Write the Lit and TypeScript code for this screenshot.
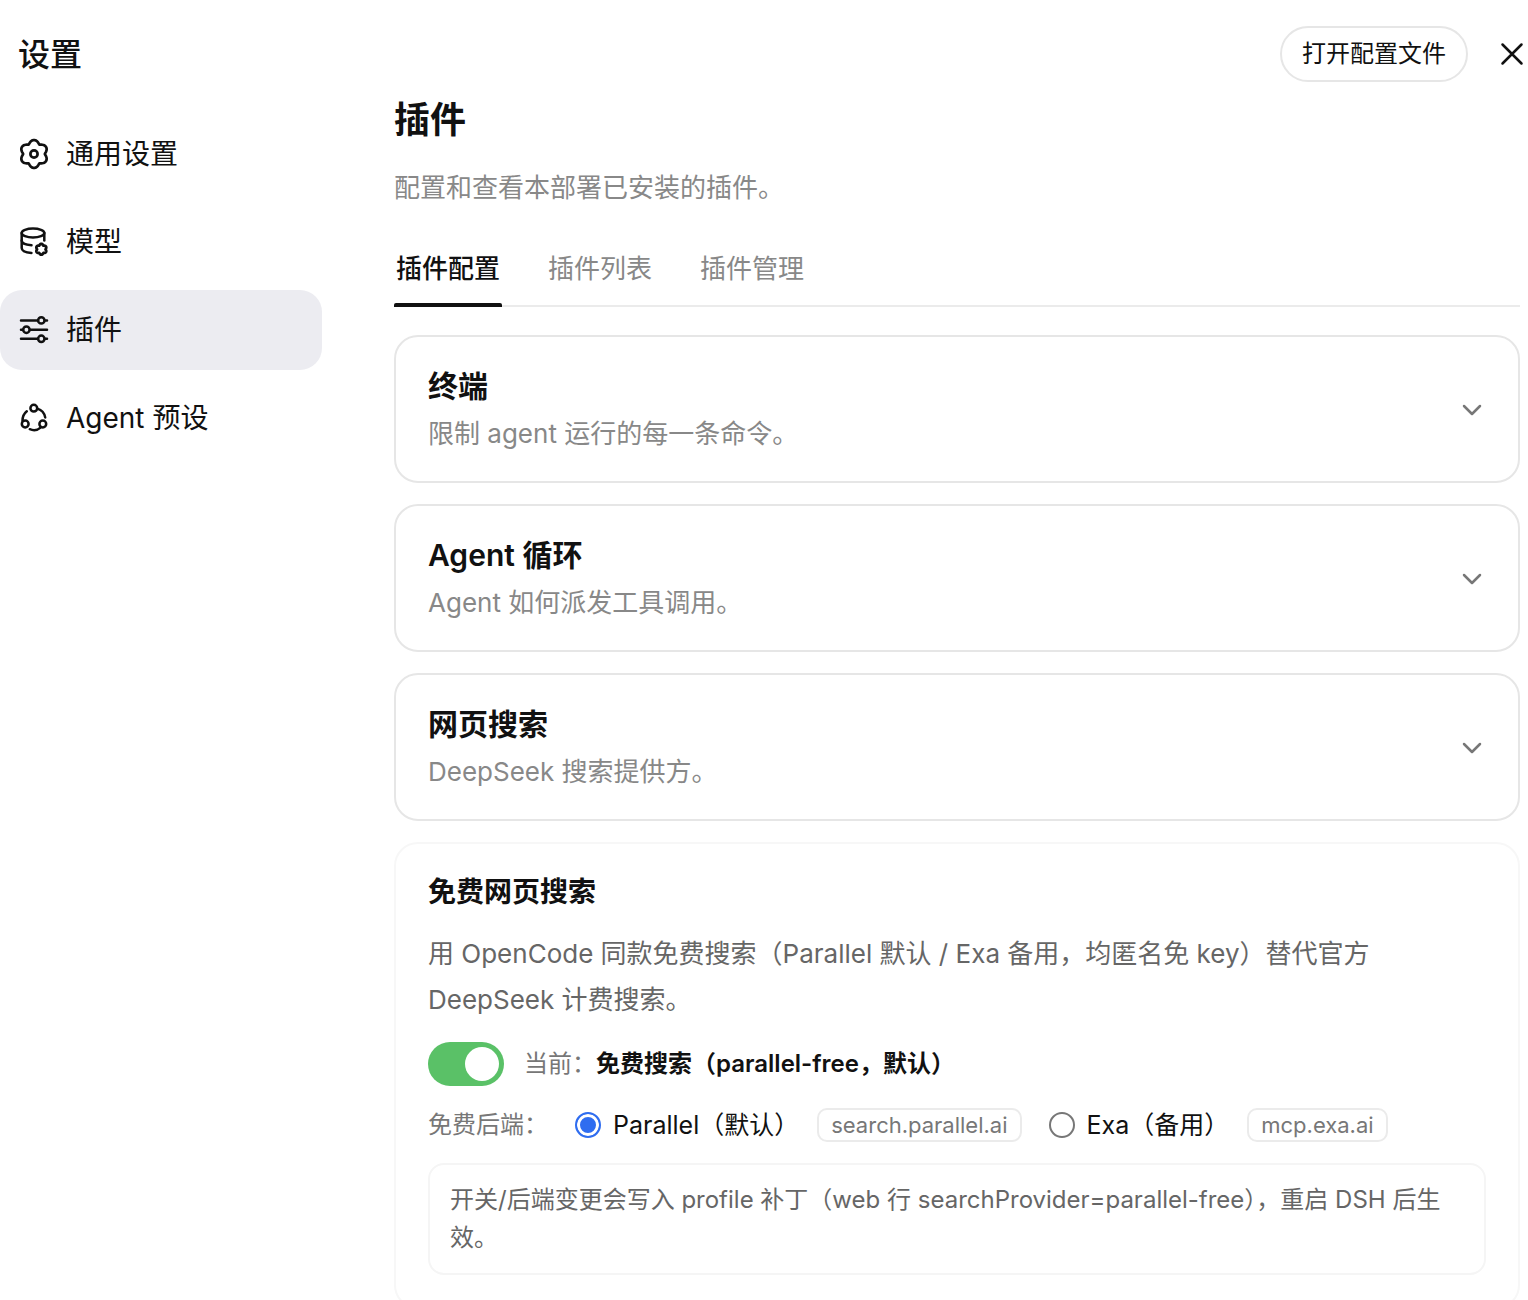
import { LitElement, html, css, svg } from "lit";
import { customElement, state } from "lit/decorators.js";
import { classMap } from "lit/directives/class-map.js";

/** Closed outline of a six-lobed cog around (cx, cy), one lobe pointing up. */
function cogPath(cx: number, cy: number, radius: number, depth: number): string {
  const points: string[] = [];
  for (let deg = 0; deg < 360; deg += 4) {
    const a = (deg * Math.PI) / 180;
    const r = radius + depth * Math.sqrt(Math.sin(3 * a) ** 2 + 0.03);
    points.push(`${(cx + r * Math.cos(a)).toFixed(2)} ${(cy + r * Math.sin(a)).toFixed(2)}`);
  }
  return `M${points.join("L")}Z`;
}

const icons = {
  general: svg`
    <path d=${cogPath(16, 16, 10.2, 3.7)} stroke-width="2.7" />
    <circle cx="16" cy="16" r="3.6" stroke-width="2.7" />`,
  models: svg`
    <ellipse cx="15" cy="7" rx="11.3" ry="4.4" />
    <path d="M3.7 7v15c0 2.6 4 4.6 9.8 5" />
    <path d="M3.7 14.6c0 2.6 4 4.4 9.8 4.7" />
    <path d="M26.3 7v7.6" />
    <path d=${cogPath(23.3, 23.3, 4, 1.4)} stroke-width="2.8" />`,
  plugins: svg`
    <path d="M3 6.4h17M26.8 6.4H29M3 15.7h2M12 15.7h17M3 24.8h17M26.8 24.8H29" />
    <circle cx="23.3" cy="6.4" r="3.2" />
    <circle cx="8.4" cy="15.7" r="3.2" />
    <circle cx="23.3" cy="24.8" r="3.2" />`,
  agents: svg`
    <circle cx="15.8" cy="6.2" r="3.4" />
    <circle cx="7.2" cy="22" r="3.4" />
    <circle cx="24.8" cy="22" r="3.4" />
    <path d="M19.4 6.6c4 1.2 7 4.4 7.8 8.8" />
    <path d="M8.8 9.2c-2.8 2.2-4.4 5.4-4.3 9.8" />
    <path d="M11.8 27.2c3.4 1.5 7.4 1.3 10.8-1.6" />`,
};

const navItems = [
  { id: "general", label: "通用设置" },
  { id: "models", label: "模型" },
  { id: "plugins", label: "插件" },
  { id: "agents", label: "Agent 预设" },
] as const;

const tabs = ["插件配置", "插件列表", "插件管理"];

const pluginCards = [
  { title: "终端", text: "限制 agent 运行的每一条命令。" },
  { title: "Agent 循环", text: "Agent 如何派发工具调用。" },
  { title: "网页搜索", text: "DeepSeek 搜索提供方。" },
];

const backends = [
  { id: "parallel", label: "Parallel（默认）", host: "search.parallel.ai" },
  { id: "exa", label: "Exa（备用）", host: "mcp.exa.ai" },
];

@customElement("app-root")
export class AppRoot extends LitElement {
  @state() private page = "plugins";
  @state() private tab = 0;
  @state() private enabled = true;
  @state() private backend = "parallel";

  static styles = css`
    :host {
      display: flex;
      flex-direction: column;
      height: 100vh;
      overflow: hidden;
      background: #fff;
      color: #111;
      font-family: Inter, "Noto Sans CJK SC", sans-serif;
      font-size: 26px;
    }
    * {
      box-sizing: border-box;
    }
    h1, h2, h3, p {
      margin: 0;
    }
    button, input {
      font: inherit;
      color: inherit;
      margin: 0;
    }
    button {
      border: 0;
      padding: 0;
      background: none;
      text-align: left;
      cursor: pointer;
    }
    svg {
      display: block;
      flex: none;
      fill: none;
      stroke: currentColor;
      stroke-width: 2.5;
      stroke-linecap: round;
      stroke-linejoin: round;
    }
    .header {
      display: flex;
      align-items: center;
      gap: 28px;
      padding: 26px 0 0 18px;
    }
    .title {
      flex: 1;
      padding-top: 2px;
      font-size: 32px;
      line-height: 54px;
      font-weight: 500;
    }
    .open-file {
      height: 56px;
      padding: 0 20px;
      border: 2px solid #e6e6e6;
      border-radius: 28px;
      font-size: 24px;
      line-height: 52px;
    }
    .close {
      width: 32px;
      height: 32px;
    }
    .body {
      flex: 1;
      min-height: 0;
      display: grid;
      grid-template-columns: 322px minmax(0, 1fr);
      column-gap: 72px;
    }
    .nav {
      display: flex;
      flex-direction: column;
      gap: 8px;
      padding-top: 32px;
    }
    .nav-item {
      display: flex;
      align-items: center;
      gap: 16px;
      height: 80px;
      padding: 0 18px;
      border-radius: 22px;
      font-size: 28px;
      line-height: 80px;
    }
    .nav-item.active {
      background: #ececf1;
    }
    .main {
      overflow-y: auto;
      scrollbar-width: none;
      padding: 14px 8px 24px 0;
    }
    .heading {
      font-size: 36px;
      line-height: 48px;
      font-weight: 600;
    }
    .lead {
      margin-top: 24px;
      line-height: 40px;
      color: #888;
    }
    .tabs {
      display: flex;
      gap: 44px;
      margin-top: 42px;
      border-bottom: 2px solid #ebebeb;
    }
    .tab {
      position: relative;
      padding: 0 2px 17px;
      line-height: 38px;
      color: #888;
    }
    .tab.active {
      color: #111;
      font-weight: 500;
    }
    .tab.active::after {
      content: "";
      position: absolute;
      left: 0;
      right: 0;
      bottom: -2px;
      height: 4px;
      border-radius: 2px 2px 0 0;
      background: #111;
    }
    .cards {
      display: flex;
      flex-direction: column;
      gap: 21px;
      margin-top: 28px;
    }
    .card {
      display: flex;
      align-items: center;
      justify-content: space-between;
      width: 100%;
      height: 148px;
      padding: 2px 32px 0;
      border: 2px solid #e6e6e6;
      border-radius: 24px;
    }
    .card-title {
      display: block;
      font-size: 30px;
      line-height: 48px;
      font-weight: 600;
    }
    .card-text {
      display: block;
      line-height: 48px;
      color: #888;
    }
    .chevron {
      color: #777;
    }
    .panel {
      padding: 28px 32px 32px;
      border: 2px solid #f7f7f7;
      border-radius: 24px;
    }
    .panel-title {
      font-size: 28px;
      line-height: 40px;
      font-weight: 600;
    }
    .panel-text {
      margin-top: 19px;
      line-height: 46px;
      color: #666;
    }
    .row {
      display: flex;
      align-items: center;
      color: #777;
      font-size: 24px;
    }
    .switch-row {
      margin-top: 19px;
      gap: 20px;
      line-height: 44px;
    }
    .switch {
      appearance: none;
      display: flex;
      align-items: center;
      width: 76px;
      height: 44px;
      padding: 0 5px;
      border-radius: 22px;
      background: #ccc;
      cursor: pointer;
    }
    .switch::before {
      content: "";
      width: 34px;
      height: 34px;
      border-radius: 50%;
      background: #fff;
    }
    .switch:checked {
      justify-content: flex-end;
      background: #5ac167;
    }
    .current {
      color: #111;
      font-weight: 600;
    }
    .backend-row {
      margin-top: 20px;
      gap: 27px;
      line-height: 38px;
    }
    .backend {
      display: flex;
      align-items: center;
    }
    .backend-label {
      display: flex;
      align-items: center;
      gap: 12px;
      color: #111;
      font-size: 25px;
    }
    .radio {
      appearance: none;
      width: 26px;
      height: 26px;
      border: 2px solid #777;
      border-radius: 50%;
      background: #fff;
    }
    .radio:checked {
      border: 2px solid #2f6df0;
      background: #2f6df0;
      box-shadow: inset 0 0 0 3px #fff;
    }
    .host {
      margin-left: 18px;
      padding: 0 12px;
      border: 2px solid #ebebeb;
      border-radius: 10px;
      font-size: 22px;
      line-height: 30px;
    }
    .note {
      margin-top: 19px;
      padding: 16px 20px;
      border: 2px solid #f5f5f5;
      border-radius: 16px;
      font-size: 24px;
      line-height: 38px;
      color: #666;
    }
  `;

  render() {
    return html`
      <header class="header">
        <h1 class="title">设置</h1>
        <button class="open-file">打开配置文件</button>
        <button class="close" aria-label="关闭">
          <svg width="32" height="32" viewBox="0 0 32 32"><path d="M6.5 6.5l19 19M25.5 6.5l-19 19" /></svg>
        </button>
      </header>
      <div class="body">
        <nav class="nav">
          ${navItems.map(
            (item) => html`<button
              class=${classMap({ "nav-item": true, active: this.page === item.id })}
              @click=${() => (this.page = item.id)}
            >
              <svg width="32" height="32" viewBox="0 0 32 32">${icons[item.id]}</svg>
              <span>${item.label}</span>
            </button>`
          )}
        </nav>
        <main class="main">
          <h2 class="heading">插件</h2>
          <p class="lead">配置和查看本部署已安装的插件。</p>
          <div class="tabs" role="tablist">
            ${tabs.map(
              (label, i) => html`<button
                role="tab"
                aria-selected=${this.tab === i}
                class=${classMap({ tab: true, active: this.tab === i })}
                @click=${() => (this.tab = i)}
              >${label}</button>`
            )}
          </div>
          <div class="cards">
            ${pluginCards.map(
              (card) => html`<button class="card" aria-expanded="false">
                <span>
                  <span class="card-title">${card.title}</span>
                  <span class="card-text">${card.text}</span>
                </span>
                <svg class="chevron" width="28" height="28" viewBox="0 0 28 28"><path d="M6 10l8 8 8-8" /></svg>
              </button>`
            )}
            <section class="panel">
              <h3 class="panel-title">免费网页搜索</h3>
              <p class="panel-text">
                用 OpenCode 同款免费搜索（Parallel 默认 / Exa 备用，均匿名免 key）替代官方 DeepSeek 计费搜索。
              </p>
              <div class="row switch-row">
                <input
                  id="free-search"
                  class="switch"
                  type="checkbox"
                  role="switch"
                  .checked=${this.enabled}
                  @change=${(e: Event) => (this.enabled = (e.target as HTMLInputElement).checked)}
                />
                <label for="free-search">当前：<strong class="current">免费搜索（parallel-free，默认）</strong></label>
              </div>
              <div class="row backend-row" role="radiogroup" aria-labelledby="backend-caption">
                <span id="backend-caption">免费后端：</span>
                ${backends.map(
                  (b) => html`<div class="backend">
                    <label class="backend-label">
                      <input
                        class="radio"
                        type="radio"
                        name="backend"
                        .checked=${this.backend === b.id}
                        @change=${() => (this.backend = b.id)}
                      />${b.label}</label>
                    <span class="host">${b.host}</span>
                  </div>`
                )}
              </div>
              <p class="note">
                开关/后端变更会写入 profile 补丁（web 行 searchProvider=parallel-free），重启 DSH 后生效。
              </p>
            </section>
          </div>
        </main>
      </div>
    `;
  }
}
